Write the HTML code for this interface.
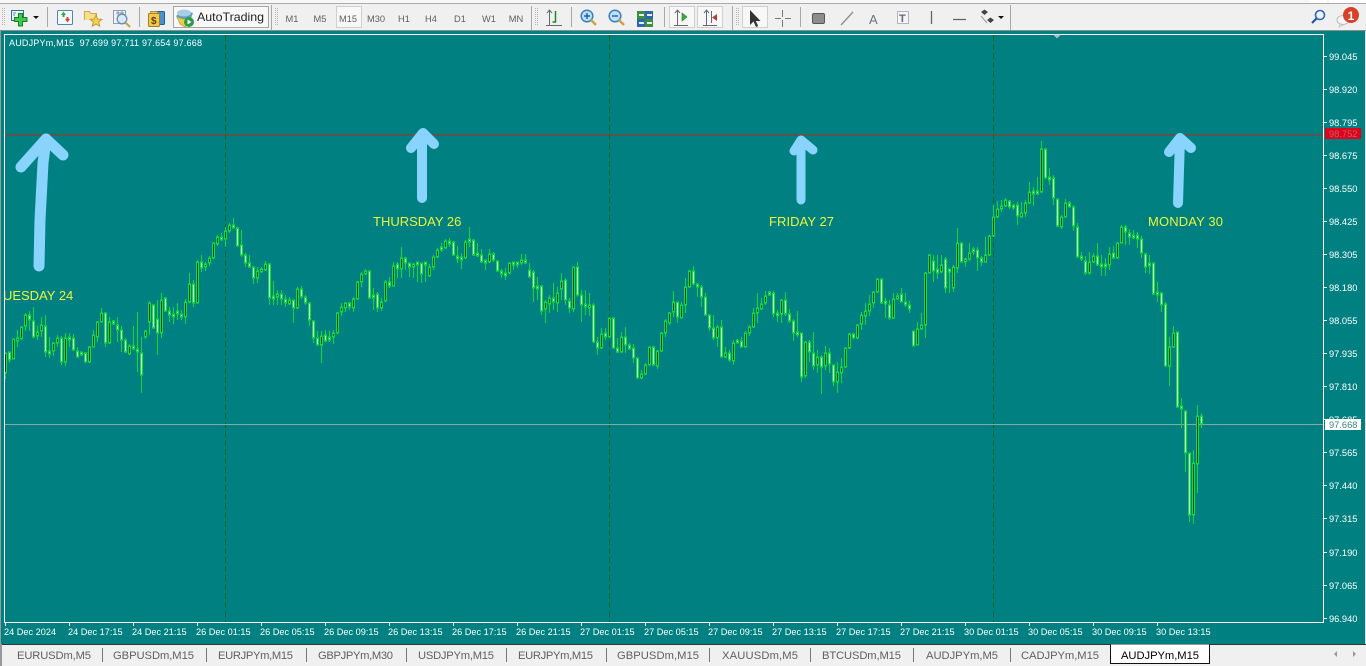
<!DOCTYPE html>
<html><head><meta charset="utf-8"><title>AUDJPYm,M15</title>
<style>
html,body{margin:0;padding:0;width:1366px;height:666px;overflow:hidden;background:#f0f0f0}
svg{display:block}
text{font-family:"Liberation Sans",sans-serif}
</style></head><body>
<svg xmlns="http://www.w3.org/2000/svg" width="1366" height="666" viewBox="0 0 1366 666">
<defs>
<clipPath id="c"><rect x="5" y="35" width="1318" height="587"/></clipPath>
<path id="w" d="M9 353V359M29 316V319M33 322V336M45 327V351M49 352V353M61 339V361M69 338V339M73 339V349M77 352V356M81 353V354M85 354V361M105 314V342M113 322V323M117 326V329M121 331V339M125 341V351M133 347V348M137 350V351M141 354V374M153 306V327M157 320V332M165 299V310M169 312V314M173 315V316M177 312V313M181 315V316M193 285V302M201 263V267M221 238V239M233 226V227M237 229V245M241 246V254M245 256V262M249 264V266M253 268V277M269 265V297M273 297V298M281 295V298M285 300V302M293 301V307M301 290V296M305 298V302M309 304V319M313 322V337M317 339V344M325 336V340M329 338V339M349 304V306M369 272V297M373 296V297M377 295V307M389 283V285M397 265V268M405 259V262M409 264V266M417 263V264M421 264V273M425 263V264M441 248V249M449 242V243M453 243V254M457 257V258M461 258V259M469 240V241M473 241V254M477 254V255M481 256V261M485 261V262M493 255V259M497 262V270M501 272V273M505 274V275M513 263V264M517 263V264M525 261V262M529 271V276M533 273V287M537 287V288M541 287V310M553 299V301M565 281V299M569 302V307M577 268V294M581 296V304M585 305V306M593 306V341M597 343V347M605 334V336M613 319V347M617 349V351M625 338V344M629 346V348M633 349V357M637 359V377M653 348V364M677 303V316M693 272V283M697 285V286M701 288V296M705 298V314M709 316V327M713 329V337M721 328V356M729 354V359M737 341V342M741 342V346M769 293V294M773 294V313M777 314V315M785 301V313M789 315V320M793 322V332M797 333V334M801 334V376M809 343V351M813 354V365M821 358V366M829 354V363M833 366V381M853 335V337M881 280V302M885 302V303M889 306V317M901 295V301M905 303V304M909 306V308M913 332V345M933 262V270M937 270V272M945 260V287M949 270V271M961 244V261M973 250V251M977 251V257M981 259V261M1009 202V206M1013 206V207M1017 206V215M1033 192V193M1037 192V193M1045 150V177M1049 178V179M1053 179V197M1057 200V225M1069 204V206M1073 208V225M1077 228V256M1081 257V258M1085 262V272M1097 257V264M1101 265V266M1105 265V266M1113 254V257M1125 228V231M1129 234V236M1133 236V237M1137 236V238M1141 240V252M1145 255V266M1149 264V265M1153 264V293M1157 293V294M1161 294V304M1165 305V365M1177 333V406M1181 407V408M1185 412V452M1189 454V514M1201 417V423"/>
<path id="b" d="M5 354V372M13 340V358M17 339V340M21 328V338M25 316V325M37 333V335M41 326V330M53 344V350M57 339V342M65 339V361M89 348V361M93 336V346M97 323V336M101 314V321M109 323V342M129 347V353M145 332V336M149 304V321M161 301V332M185 303V316M189 285V301M197 263V302M205 265V266M209 259V262M213 244V257M217 238V243M225 232V238M229 226V230M257 272V277M261 270V271M265 265V269M277 295V296M289 301V303M297 290V307M321 337V344M333 334V336M337 314V332M341 308V311M345 304V307M353 300V307M357 283V298M361 275V281M365 272V273M381 303V307M385 283V300M393 267V285M401 259V268M413 265V266M429 268V275M433 258V266M437 251V256M445 242V247M465 243V257M489 255V261M509 264V272M521 261V262M545 303V308M549 299V303M557 294V302M561 282V288M573 268V308M589 306V307M601 335V347M609 319V336M621 338V351M641 375V377M645 366V373M649 348V364M657 352V365M661 334V350M665 322V332M669 314V322M673 303V311M681 306V317M685 288V304M689 272V286M717 328V337M725 354V356M733 344V360M745 334V346M749 328V332M753 314V326M757 309V312M761 305V308M765 297V302M781 301V313M805 343V375M817 358V364M825 354V365M837 373V381M841 368V372M845 349V366M849 335V347M857 326V337M861 316V323M865 312V315M869 305V310M873 293V302M877 280V291M893 300V317M897 297V298M917 330V344M921 326V328M925 274V324M929 256V272M941 266V271M953 268V287M957 244V267M965 260V261M969 254V258M985 256V261M989 237V254M993 218V235M997 210V216M1001 207V208M1005 201V205M1021 214V216M1025 204V212M1029 193V202M1041 150V191M1061 218V226M1065 204V216M1089 263V272M1093 257V261M1109 255V264M1117 244V257M1121 228V242M1169 348V365M1173 334V346M1193 464V514M1197 417V463"/>
</defs>
<rect width="1366" height="666" fill="#f0f0f0"/>
<rect width="1366" height="3" fill="#f7f7f7"/>
<rect y="3" width="1366" height="1" fill="#ababab"/>
<rect x="1310" y="0" width="17" height="3" fill="#fff"/><rect x="1329" y="0" width="17" height="3" fill="#fff"/><rect x="1348" y="0" width="17" height="3" fill="#fff"/>
<rect y="30" width="1366" height="1" fill="#8e8e8e"/>
<rect x="0" y="31" width="1366" height="613" fill="#008080"/>
<rect x="0" y="31" width="1" height="613" fill="#9a9a9a"/>
<rect x="1365" y="31" width="1" height="613" fill="#e0e0e0"/>

<!-- toolbar separators -->
<g fill="#a8a8a8">
<rect x="47" y="7" width="1" height="20"/><rect x="139" y="7" width="1" height="20"/><rect x="271" y="5" width="1" height="25"/>
<rect x="531" y="6" width="1" height="24"/><rect x="571" y="7" width="1" height="20"/><rect x="664" y="7" width="1" height="20"/><rect x="732" y="6" width="1" height="24"/><rect x="800" y="7" width="1" height="20"/><rect x="1010" y="5" width="1" height="25"/>
</g>
<g stroke="#b5b5b5" stroke-dasharray="1 1" fill="none">
<path d="M2.5 8V26M4.5 8V26M275.5 8V26M277.5 8V26M535.5 8V26M537.5 8V26M736.5 8V26M738.5 8V26"/>
</g>

<!-- new chart -->
<rect x="11.5" y="10.5" width="12" height="10" fill="#eaf2fa" stroke="#3a6d96"/>
<path d="M13 13h3M13 15h2" stroke="#5b8db5"/>
<path d="M18.500 13.500h4v4h4.500v4h-4.500v4.500h-4v-4.500h-4v-4h4z" fill="#3ecb45" stroke="#1b7c2a"/>
<path d="M33 16h6l-3 3z" fill="#111"/>
<!-- market watch -->
<rect x="57.5" y="10.5" width="15" height="14" rx="1" fill="#f4f8fc" stroke="#4d89ad"/>
<path d="M61 15l2.500-3.500 2.500 3.500h-1.500v2h-2v-2z" fill="#33a84a"/><path d="M65 19h1.500v-2h2v2h1.500l-2.500 3.500z" fill="#d8452b"/>
<!-- folder star -->
<path d="M84.500 20V11.500h5l1.500 2h5.500v6" fill="#f6df8e" stroke="#c9a94a"/>
<path d="M96 15l1.700 4 4.300.3-3.300 2.800 1.100 4.200-3.800-2.300-3.800 2.300 1.100-4.200-3.300-2.800 4.300-.3z" fill="#f3cf4c" stroke="#b98f24" stroke-width=".8"/>
<!-- history magnifier -->
<rect x="113.500" y="10.500" width="12" height="13" fill="#eef1f5" stroke="#8fa0b4"/>
<path d="M118 11v9M122 11v9M116 13h8" stroke="#8b97a6"/>
<circle cx="122" cy="19" r="4.800" fill="#d5e9f6" stroke="#6e8fab" stroke-width="1.300"/>
<path d="M126 23l4 4" stroke="#c9a53c" stroke-width="2.200"/>
<!-- terminal dollar -->
<rect x="155.500" y="11.500" width="9" height="13" rx="1" fill="#4a8fd0" stroke="#1f5f9b"/>
<rect x="148.500" y="13.500" width="11" height="13" rx="1" fill="#f2c84f" stroke="#a67e16"/>
<path d="M150.500 11.500h7v2h-7z" fill="#e8c56c" stroke="#a67e16" stroke-width=".7"/>
<text x="151" y="24" font-size="10" font-weight="bold" fill="#604208">$</text>

<!-- AutoTrading -->
<rect x="173.500" y="6.500" width="95" height="21" fill="#f8f8f8" stroke="#a5a5a5"/>
<path d="M176 16l8-6 9 3-3 8-7 3z" fill="#5f9dc8"/><ellipse cx="184" cy="13" rx="7" ry="3.500" fill="#a9cde6"/>
<path d="M177 17l6 2 7-1-1 6-4 3-5-3z" fill="#e6cf55" stroke="#a9932b" stroke-width=".6"/>
<circle cx="189" cy="22" r="5" fill="#2f9b3e"/><path d="M187.500 19.500l4 2.500-4 2.500z" fill="#fff"/>
<text x="197" y="21" font-size="12" fill="#222" textLength="67" lengthAdjust="spacingAndGlyphs">AutoTrading</text>

<!-- timeframes -->
<rect x="336.500" y="6.500" width="25" height="21" fill="#f8f8f8" stroke="#cfcfcf"/>
<g font-size="9.300" fill="#606060" text-anchor="middle">
<text x="292" y="22">M1</text><text x="320" y="22">M5</text><text x="348" y="22">M15</text><text x="376" y="22">M30</text><text x="404" y="22">H1</text><text x="431" y="22">H4</text><text x="460" y="22">D1</text><text x="489" y="22">W1</text><text x="516" y="22">MN</text>
</g>

<!-- chart type -->
<path d="M549.500 10v16M546 25.500h16M547 13l2.500-3 2.500 3" fill="none" stroke="#667"/>
<path d="M555.500 11v11h-3" fill="none" stroke="#1a8a2b" stroke-width="1.500"/>
<!-- zoom in/out -->
<circle cx="587" cy="16" r="5.800" fill="#bfe0f6" stroke="#3a7fc0" stroke-width="1.500"/>
<path d="M584 16h6M587 13v6" stroke="#1f5da8" stroke-width="1.400"/><path d="M591 20l5 5" stroke="#c9a53c" stroke-width="2.400"/>
<circle cx="615" cy="16" r="5.800" fill="#bfe0f6" stroke="#3a7fc0" stroke-width="1.500"/>
<path d="M612 16h6" stroke="#1f5da8" stroke-width="1.400"/><path d="M619 20l5 5" stroke="#c9a53c" stroke-width="2.400"/>
<!-- tile -->
<rect x="637" y="11" width="8" height="8" fill="#3d8f3d"/><rect x="645" y="11" width="8" height="8" fill="#2c66b0"/><rect x="637" y="19" width="8" height="8" fill="#2c66b0"/><rect x="645" y="19" width="8" height="8" fill="#3d8f3d"/>
<path d="M639 15h5M647 15h5M639 23h5M647 23h5" stroke="#e7eef0" stroke-width="2"/>
<!-- autoscroll, shift -->
<rect x="669.500" y="6.500" width="25" height="21" fill="#f8f8f8" stroke="#cfcfcf"/><rect x="697.500" y="6.500" width="25" height="21" fill="#f8f8f8" stroke="#cfcfcf"/>
<path d="M677.500 10v16M674 25.500h14M675 13l2.500-3 2.500 3M706.500 10v16M703 25.500h14M704 13l2.500-3 2.500 3M711.500 11v12" fill="none" stroke="#667"/>
<path d="M682 13l5 4-5 4z" fill="#39ae3e" stroke="#1d7c2b" stroke-width=".6"/>
<path d="M717 14l-5 3.500 5 3.500z" fill="#b53f30"/>
<!-- cursor -->
<rect x="742.500" y="6.500" width="25" height="21" fill="#f8f8f8" stroke="#cfcfcf"/>
<path d="M750 10v15l3.500-3.500 2.500 5.500 2.200-1-2.400-5h4.700z" fill="#333"/>
<path d="M782.500 10v7M782.500 20v7M775 18.500h6M785 18.500h6" stroke="#777"/>
<!-- objects -->
<rect x="812.500" y="13.500" width="12" height="10" rx="1.500" fill="#8d8d8d" stroke="#555"/>
<path d="M841 25l12-13" stroke="#8b8b8b" stroke-width="1.300"/>
<text x="869" y="24" font-size="13" fill="#6a7276">A</text>
<rect x="897.500" y="11.500" width="11" height="12" fill="#f4f4f4" stroke="#777" stroke-dasharray="1 1"/>
<text x="899" y="22" font-size="11" font-weight="bold" fill="#667">T</text>
<path d="M931.500 11v13" stroke="#666" stroke-width="1.300"/>
<path d="M953 19.500h13" stroke="#666" stroke-width="1.300"/>
<path d="M981 12l3.500-2.500 3.500 2.500-3.500 3zM987 20l3.500-2.500 3.500 2.500-3.500 3z" fill="#444"/><path d="M981 16l6 7" stroke="#999"/>
<path d="M998 16h6l-3 3z" fill="#111"/>
<!-- right icons -->
<circle cx="1320" cy="15" r="4.500" fill="#eaf3fb" stroke="#2f68b5" stroke-width="1.600"/><path d="M1316.500 18.500l-4.500 4.500" stroke="#2554a0" stroke-width="2.200"/>
<ellipse cx="1343" cy="20" rx="6" ry="4.500" fill="#f5f5f5" stroke="#bbb"/>
<path d="M1340 24l-1 3 4-2z" fill="#e8e8e8" stroke="#bbb" stroke-width=".6"/>
<circle cx="1351" cy="15" r="8" fill="#d8402a"/>
<text x="1351" y="20" font-size="12" font-weight="bold" fill="#fff" text-anchor="middle">1</text>

<!-- chart frame -->
<path d="M4.500 622.500V34.500H1323.500V622.500H4.500" fill="none" stroke="#fff"/>
<path d="M1053 34.500h8l-4 4z" fill="#a9bfbf"/>
<g clip-path="url(#c)">
<path d="M225.500 35V622M609.500 35V622M993.500 35V622" stroke="#006a24" stroke-dasharray="6 3" fill="none"/>
<rect x="5" y="134.500" width="1318" height="1" fill="#b02a26"/>
<rect x="5" y="424" width="1318" height="1" fill="#86a8a4"/>
<g transform="translate(.5 0)" fill="none" stroke-width="1">
<path stroke="#10d836" d="M5 353V379M9 352V363M13 339V359M17 330V347M21 327V339M25 313V331M29 311V331M33 307V338M37 326V340M41 317V337M45 315V357M49 337V358M53 342V356M57 335V347M61 336V365M65 333V366M69 333V347M73 334V351M77 347V358M81 352V356M85 352V363M89 346V363M93 330V347M97 321V342M101 308V322M105 312V347M109 317V344M113 320V325M117 317V342M121 326V352M125 338V353M129 344V355M133 326V350M137 312V372M141 337V393M145 330V339M149 301V335M153 304V329M157 300V355M161 293V338M165 297V312M169 307V322M173 307V324M177 303V320M181 310V320M185 299V324M189 273V303M193 280V307M197 260V303M201 255V272M205 262V271M209 256V266M213 242V259M217 235V246M221 233V241M225 227V247M229 223V233M233 218V228M237 227V246M241 230V257M245 253V267M249 255V268M253 266V284M257 267V283M261 267V271M265 261V271M269 263V305M273 281V305M277 290V305M281 290V305M285 295V307M289 297V305M293 300V323M297 287V309M301 286V299M305 295V305M309 302V326M313 320V343M317 331V346M321 331V363M325 330V342M329 331V342M333 330V344M337 312V334M341 303V316M345 302V312M349 302V310M353 297V312M357 281V300M361 272V287M365 269V275M369 270V299M373 288V310M377 292V312M381 298V311M385 280V302M389 277V288M393 262V286M397 262V278M401 247V278M405 257V270M409 263V277M413 263V278M417 263V282M421 263V283M425 262V282M429 264V277M433 255V270M437 248V258M441 243V252M445 239V249M449 238V247M453 241V256M457 246V263M461 253V269M465 240V259M469 227V247M473 239V256M477 243V257M481 249V263M485 260V270M489 249V263M493 252V262M497 260V272M501 269V278M505 268V280M509 262V274M513 262V270M517 262V268M521 254V265M525 254V264M529 263V278M533 270V302M537 277V300M541 285V315M545 300V323M549 295V313M553 283V310M557 287V312M561 273V300M565 278V305M569 298V313M573 267V312M577 262V297M581 290V322M585 290V315M589 293V316M593 303V343M597 337V355M601 328V349M605 328V340M609 318V338M613 317V349M617 338V353M621 332V353M625 327V353M629 343V350M633 344V363M637 357V379M641 370V379M645 363V375M649 347V365M653 346V366M657 350V369M661 332V352M665 319V337M669 312V325M673 291V317M677 302V323M681 302V318M685 278V313M689 270V288M693 266V285M697 283V297M701 285V307M705 293V316M709 315V331M713 315V340M717 325V347M721 320V357M725 347V358M729 350V362M733 340V365M737 339V343M741 337V348M745 331V347M749 325V336M753 308V328M757 293V323M761 298V310M765 291V305M769 291V296M773 291V317M777 310V322M781 299V323M785 292V316M789 309V323M793 319V341M797 311V337M801 333V382M805 342V378M809 340V362M813 332V370M817 350V373M821 355V394M825 346V370M829 348V373M833 364V386M837 362V393M841 358V383M845 348V368M849 333V349M853 333V339M857 324V339M861 312V330M865 303V325M869 295V316M873 291V308M877 278V293M881 278V304M885 298V318M889 300V320M893 293V319M897 293V299M901 288V302M905 293V307M909 301V313M913 331V346M917 322V345M921 313V330M925 272V338M929 254V273M933 255V282M937 255V279M941 255V273M945 257V293M949 270V293M953 265V292M957 228V273M961 242V262M965 258V267M969 243V261M973 247V255M977 247V271M981 256V266M985 237V262M989 235V256M993 205V237M997 201V218M1001 200V212M1005 198V207M1009 200V209M1013 204V210M1017 202V225M1021 202V217M1025 200V217M1029 182V204M1033 187V206M1037 177V195M1041 141V193M1045 149V179M1049 168V185M1053 175V205M1057 199V227M1061 215V229M1065 199V218M1069 201V207M1073 205V231M1077 223V258M1081 252V261M1085 256V275M1089 252V275M1093 253V263M1097 243V266M1101 255V276M1105 258V276M1109 247V270M1113 246V259M1117 242V259M1121 225V243M1125 225V245M1129 229V245M1133 230V239M1137 232V248M1141 236V258M1145 253V273M1149 255V274M1153 263V295M1157 282V302M1161 292V312M1165 302V367M1169 337V386M1173 326V348M1177 332V408M1181 398V428M1185 410V472M1189 453V522M1193 450V524M1197 405V493M1201 413V428"/>
<g stroke="#14dc3c" stroke-width="3" stroke-linecap="square"><use href="#w"/><use href="#b"/></g>
<use href="#w" stroke="#c8ffd0"/>
<use href="#b" stroke="#024a20"/>
</g>
<!-- arrows -->
<g fill="none" stroke="#88d4fc" stroke-linecap="round" stroke-linejoin="round">
<path stroke-width="11" d="M39 266L40 220L43 163L46 139M21 167L46 139L63 155"/>
<path stroke-width="10" d="M422 198V134M411 148L423 133L434 144"/>
<path stroke-width="9" d="M801 200V141M794 151L801 140L813 150"/>
<path stroke-width="10" d="M1178 203L1180 138M1169 152L1180 138L1191 148"/>
</g>
<g font-size="13" fill="#ecf53a">
<text x="-5" y="300">TUESDAY 24</text>
<text x="373" y="226">THURSDAY 26</text>
<text x="769" y="226" textLength="65">FRIDAY 27</text>
<text x="1148" y="226" textLength="75">MONDAY 30</text>
</g>
</g>
<text x="9" y="46" font-size="9" fill="#fff" xml:space="preserve" textLength="193">AUDJPYm,M15  97.699 97.711 97.654 97.668</text>

<!-- price axis -->
<path d="M1323 56.500h4M1323 89.500h4M1323 122.500h4M1323 155.500h4M1323 188.500h4M1323 221.500h4M1323 254.500h4M1323 287.500h4M1323 320.500h4M1323 353.500h4M1323 386.500h4M1323 419.500h4M1323 452.500h4M1323 485.500h4M1323 518.500h4M1323 552.500h4M1323 585.500h4M1323 618.500h4" stroke="#fff"/>
<g font-size="9.300" fill="#fff">
<text x="1329" y="60">99.045</text><text x="1329" y="93">98.920</text><text x="1329" y="126">98.795</text><text x="1329" y="159">98.675</text><text x="1329" y="192">98.550</text><text x="1329" y="225">98.425</text><text x="1329" y="258">98.305</text><text x="1329" y="291">98.180</text><text x="1329" y="324">98.055</text><text x="1329" y="357">97.935</text><text x="1329" y="390">97.810</text><text x="1329" y="423">97.685</text><text x="1329" y="456">97.565</text><text x="1329" y="489">97.440</text><text x="1329" y="522">97.315</text><text x="1329" y="556">97.190</text><text x="1329" y="589">97.065</text><text x="1329" y="622">96.940</text>
</g>
<rect x="1325" y="128" width="36" height="11" fill="#e2001a"/>
<text x="1329" y="137" font-size="9.300" fill="#b06a6a">98.752</text>
<rect x="1325" y="419" width="36" height="11" fill="#fff"/>
<text x="1329" y="428" font-size="9.300" fill="#3f7f7f">97.668</text>

<!-- time axis -->
<path d="M5.500 622v4M69.500 622v4M133.500 622v4M197.500 622v4M261.500 622v4M325.500 622v4M389.500 622v4M453.500 622v4M517.500 622v4M581.500 622v4M645.500 622v4M709.500 622v4M773.500 622v4M837.500 622v4M901.500 622v4M965.500 622v4M1029.500 622v4M1093.500 622v4M1157.500 622v4" stroke="#fff"/>
<g font-size="9.200" fill="#fff">
<text x="4" y="635">24 Dec 2024</text><text x="68" y="635">24 Dec 17:15</text><text x="132" y="635">24 Dec 21:15</text><text x="196" y="635">26 Dec 01:15</text><text x="260" y="635">26 Dec 05:15</text><text x="324" y="635">26 Dec 09:15</text><text x="388" y="635">26 Dec 13:15</text><text x="452" y="635">26 Dec 17:15</text><text x="516" y="635">26 Dec 21:15</text><text x="580" y="635">27 Dec 01:15</text><text x="644" y="635">27 Dec 05:15</text><text x="708" y="635">27 Dec 09:15</text><text x="772" y="635">27 Dec 13:15</text><text x="836" y="635">27 Dec 17:15</text><text x="900" y="635">27 Dec 21:15</text><text x="964" y="635">30 Dec 01:15</text><text x="1028" y="635">30 Dec 05:15</text><text x="1092" y="635">30 Dec 09:15</text><text x="1156" y="635">30 Dec 13:15</text>
</g>

<!-- tabs -->
<rect y="644" width="1366" height="22" fill="#f0f0f0"/>
<rect y="644" width="1366" height="1" fill="#333"/>
<rect x="0" y="644" width="2" height="22" fill="#999"/>
<path d="M102.500 648v14M206.500 648v14M306.500 648v14M406.500 648v14M506.500 648v14M606.500 648v14M709.500 648v14M810.500 648v14M913.500 648v14M1010.500 648v14" stroke="#777"/>
<g font-size="11.200" fill="#5f5f5f">
<text x="17" y="659" textLength="74">EURUSDm,M5</text><text x="113" y="659" textLength="81">GBPUSDm,M15</text><text x="218" y="659" textLength="75">EURJPYm,M15</text><text x="318" y="659" textLength="75">GBPJPYm,M30</text><text x="418" y="659" textLength="76">USDJPYm,M15</text><text x="518" y="659" textLength="75">EURJPYm,M15</text><text x="617" y="659" textLength="82">GBPUSDm,M15</text><text x="722" y="659" textLength="76">XAUUSDm,M5</text><text x="822" y="659" textLength="79">BTCUSDm,M15</text><text x="926" y="659" textLength="72">AUDJPYm,M5</text><text x="1021" y="659" textLength="78">CADJPYm,M15</text>
</g>
<path d="M1110.500 644.500V663.500H1209.500V644.500" fill="#fff" stroke="#111"/>
<text x="1121" y="659" font-size="11.200" fill="#000" textLength="78">AUDJPYm,M15</text>
<path d="M1337 651v6l-3-3zM1353 651v6l3-3z" fill="#999"/>
</svg>
</body></html>
